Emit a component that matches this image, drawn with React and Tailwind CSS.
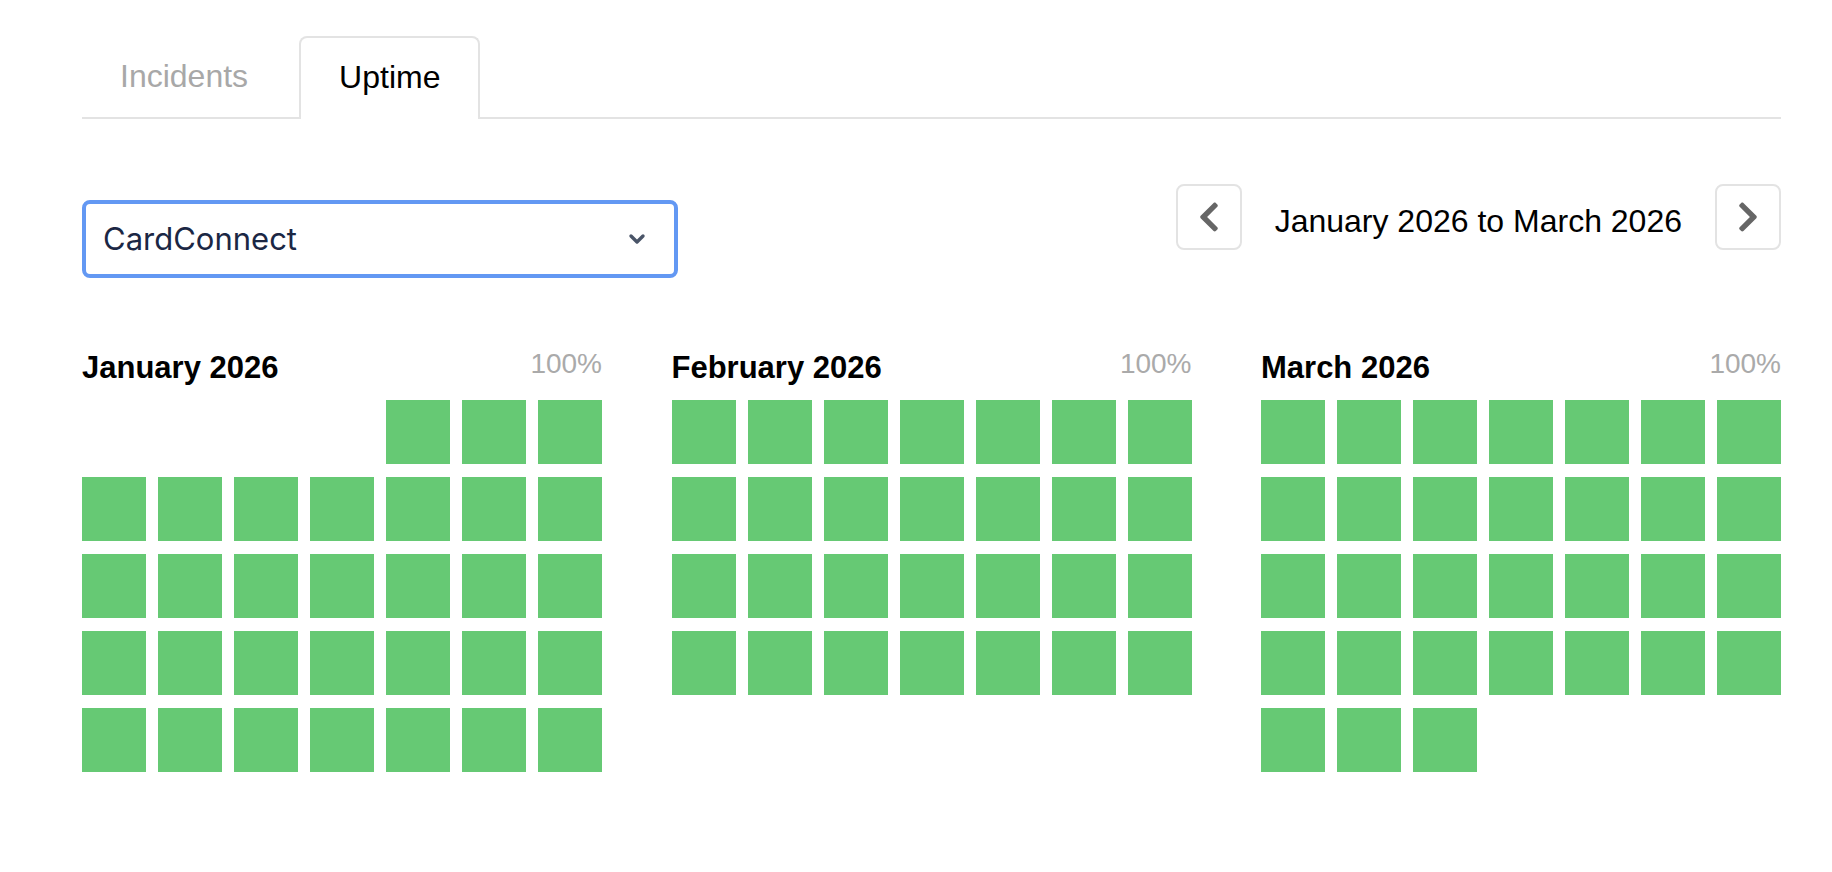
import React from "react";
import { FaChevronLeft, FaChevronRight } from "react-icons/fa";

const months = [
  { name: "January 2026", offset: 4, days: 31 },
  { name: "February 2026", offset: 0, days: 28 },
  { name: "March 2026", offset: 0, days: 31 },
];

function MonthCard({ name, offset, days }) {
  const cells = [];
  for (let i = 0; i < offset; i++) cells.push(<div key={"e" + i} className="h-[64px]" />);
  for (let d = 1; d <= days; d++)
    cells.push(<div key={d} className="h-[64px] bg-[#66c974]" title={`${name} ${d}: 100%`} />);

  return (
    <div className="w-[520px]">
      <div className="flex items-start justify-between mb-[14px]">
        <h3 className="text-[31px] leading-[36px] font-bold text-black">{name}</h3>
        <span className="text-[28px] leading-[28px] text-[#aaaaaa]">100%</span>
      </div>
      <div className="grid grid-cols-7 gap-x-[12px] gap-y-[13px]">{cells}</div>
    </div>
  );
}

export default function App() {
  return (
    <div className="min-h-screen bg-white pt-[36px] pl-[82px] font-['Liberation_Sans',Arial,sans-serif]">
      <div className="w-[1699px]">
        {/* tabs */}
        <div className="flex border-b-2 border-[#e3e3e3]">
          <button className="h-[81px] pb-[1px] px-[38px] mr-[13px] text-[32px] text-[#a8a8a8]">Incidents</button>
          <button className="h-[83px] pb-[3px] -mb-[2px] px-[38px] border-2 border-b-0 border-[#e3e3e3] rounded-t-[8px] bg-white text-[32px] text-black">
            Uptime
          </button>
        </div>

        {/* controls */}
        <div className="flex items-start justify-between mt-[65px]">
          <div className="mt-[16px] w-[596px] h-[78px] border-[4px] border-[#6398f3] rounded-[8px] flex items-center justify-between pl-[17px] pr-[28px]">
            <span className="text-[31px] text-[#1b2744] font-['Inter',sans-serif]">CardConnect</span>
            <svg width="18" height="12" viewBox="0 0 18 12" fill="none">
              <path d="M3 3 L9 9 L15 3" stroke="#4a5568" strokeWidth="3.4" strokeLinecap="round" strokeLinejoin="round" />
            </svg>
          </div>

          <div className="flex items-center">
            <button className="w-[66px] h-[66px] border-2 border-[#e3e3e3] rounded-[8px] flex items-center justify-center text-[#666666]">
              <FaChevronLeft size={34} />
            </button>
            <span className="px-[33px] text-[32px] text-black mt-[8px]">January 2026 to March 2026</span>
            <button className="w-[66px] h-[66px] border-2 border-[#e3e3e3] rounded-[8px] flex items-center justify-center text-[#666666]">
              <FaChevronRight size={34} />
            </button>
          </div>
        </div>

        {/* calendars */}
        <div className="flex justify-between mt-[72px]">
          {months.map((m) => (
            <MonthCard key={m.name} {...m} />
          ))}
        </div>
      </div>
    </div>
  );
}
